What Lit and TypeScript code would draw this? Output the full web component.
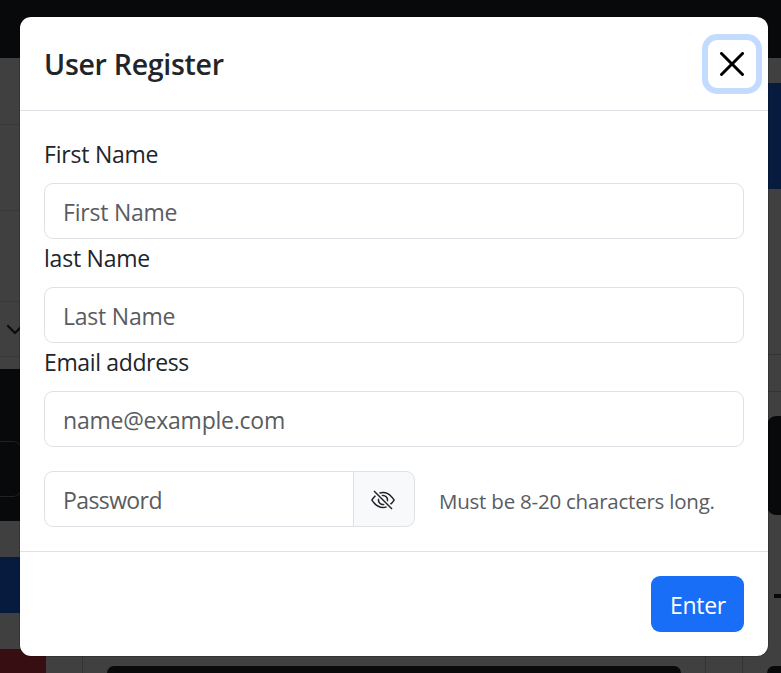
import { LitElement, html, css, svg } from "lit";
import { customElement } from "lit/decorators.js";

@customElement("page-behind")
class PageBehind extends LitElement {
  static styles = css`
    :host { display: flex; flex-direction: column; height: 100%; background: #404040; overflow: hidden; }
    .nav { height: 58px; flex: none; background: #08090b; }
    .cols { flex: 1; display: flex; min-height: 0; }
    .left { width: 82px; flex: none; border-right: 1px solid #333435; display: flex; flex-direction: column; }
    .row { box-sizing: border-box; border-bottom: 1px solid #373838; flex: none; }
    .r1 { height: 67px; }
    .r2 { height: 86px; }
    .r3 { height: 91px; }
    .r4 { height: 55px; padding: 22px 0 0 6px; }
    .r4 svg { display: block; }
    .dark { margin-top: 12px; height: 152px; flex: none; background: #08090b; box-sizing: border-box; padding-top: 72px; }
    .dark div { box-sizing: border-box; height: 56px; width: 22px; border: 1px solid #202224; border-left: 0; border-radius: 0 9px 9px 0; }
    .blue { margin-top: 36px; height: 56px; flex: none; background: #061b3e; }
    .red { margin-top: 36px; width: 46px; flex: 1; background: #370e12; }
    .mid { flex: 1; display: flex; flex-direction: column; justify-content: flex-end; padding: 0 24px; }
    .card { height: 7px; border-radius: 9px 9px 0 0; background: #08090b; }
    .gutter { width: 36px; flex: none; display: flex; align-items: stretch; border: solid #333435; border-width: 0 1px; }
    .right { width: 38px; flex: none; display: flex; flex-direction: column; }
    .rblue { margin-top: 25px; height: 106px; flex: none; background: #061b3e; }
    .line { height: 1px; flex: none; background: #333435; }
    .l1 { margin-top: 165px; }
    .l2 { margin-top: 36px; }
    .box { margin: 24px 0 0 24px; height: 99px; flex: none; border-radius: 9px 0 0 9px; background: #08090b; }
    .dash { margin: 79px 0 0 31px; height: 4px; flex: none; background: #08090b; }
    .box2 { margin: 68px 0 0 24px; flex: 1; border-radius: 9px 0 0 0; background: #08090b; }
  `;
  render() {
    return html`
      <div class="nav"></div>
      <div class="cols">
        <div class="left">
          <div class="row r1"></div>
          <div class="row r2"></div>
          <div class="row r3"></div>
          <div class="row r4">
            <svg width="18" height="12" viewBox="0 0 18 12"><path d="M2 2l7 7 7-7" fill="none" stroke="#0b0c0d" stroke-width="2.3" stroke-linecap="round" stroke-linejoin="round"/></svg>
          </div>
          <div class="dark"><div></div></div>
          <div class="blue"></div>
          <div class="red"></div>
        </div>
        <div class="mid"><div class="card"></div></div>
        <div class="gutter"></div>
        <div class="right">
          <div class="rblue"></div>
          <div class="line l1"></div>
          <div class="line l2"></div>
          <div class="box"></div>
          <div class="dash"></div>
          <div class="box2"></div>
        </div>
      </div>`;
  }
}

const closeIcon = svg`<svg width="24" height="24" viewBox="0 0 16 16" fill="#000"><path d="M.293.293a1 1 0 0 1 1.414 0L8 6.586 14.293.293a1 1 0 1 1 1.414 1.414L9.414 8l6.293 6.293a1 1 0 0 1-1.414 1.414L8 9.414l-6.293 6.293a1 1 0 0 1-1.414-1.414L6.586 8 .293 1.707a1 1 0 0 1 0-1.414z"/></svg>`;

const eyeSlash = svg`<svg width="24" height="24" viewBox="0 0 16 16" fill="#212529"><path d="M13.359 11.238C15.06 9.72 16 8 16 8s-3-5.5-8-5.5a7.028 7.028 0 0 0-2.79.588l.77.771A5.944 5.944 0 0 1 8 3.5c2.12 0 3.879 1.168 5.168 2.457A13.134 13.134 0 0 1 14.828 8c-.058.087-.122.183-.195.288-.335.48-.83 1.12-1.465 1.755-.165.165-.337.328-.517.486l.708.709z"/><path d="M11.297 9.176a3.5 3.5 0 0 0-4.474-4.474l.823.823a2.5 2.5 0 0 1 2.829 2.829l.822.822zm-2.943 1.299.822.822a3.5 3.5 0 0 1-4.474-4.474l.823.823a2.5 2.5 0 0 0 2.829 2.829z"/><path d="M3.35 5.47c-.18.16-.353.322-.518.487A13.134 13.134 0 0 0 1.172 8l.195.288c.335.48.83 1.12 1.465 1.755C4.121 11.332 5.881 12.5 8 12.5c.716 0 1.39-.133 2.02-.36l.77.772A7.029 7.029 0 0 1 8 13.5C3 13.5 0 8 0 8s.939-1.721 2.641-3.238l.708.709zm10.296 8.884-12-12 .708-.708 12 12-.708.708z"/></svg>`;

@customElement("app-root")
class AppRoot extends LitElement {
  static styles = css`
    :host { display: block; position: relative; height: 673px; overflow: hidden; font-family: "Open Sans", "Noto Sans", sans-serif; font-size: 23px; color: #212529; }
    .modal { position: absolute; top: 16px; left: 19px; box-sizing: border-box; width: 750px; height: 641px; border: 1px solid rgba(0, 0, 0, 0.175); border-radius: 12px; background: #fff; background-clip: padding-box; display: flex; flex-direction: column; }
    .header { box-sizing: border-box; height: 94px; padding: 0 12px 0 24px; border-bottom: 1px solid #dee2e6; display: flex; align-items: center; justify-content: space-between; }
    h1 { margin: 1px 0 0; font-size: 28.5px; line-height: 45px; font-weight: 600; letter-spacing: -0.28px; }
    .close { width: 48px; height: 48px; padding: 0; border: 0; border-radius: 9px; background: #fff; box-shadow: 0 0 0 6px #c2dbfe; display: grid; place-items: center; }
    .body { padding: 24px; height: 392px; }
    label { display: block; line-height: 36px; height: 36px; margin-bottom: 12px; padding-top: 1px; box-sizing: border-box; }
    input { display: block; box-sizing: border-box; width: 100%; height: 56px; padding: 1px 18px 0; border: 1px solid #dee2e6; border-radius: 9px; font: inherit; letter-spacing: inherit; color: inherit; background: #fff; outline: none; }
    input::placeholder { color: #595c5f; opacity: 1; }
    .first { letter-spacing: -0.22px; }
    .last { letter-spacing: -0.22px; }
    .email { letter-spacing: -0.23px; }
    .email label { letter-spacing: -0.36px; }
    .row { display: flex; margin-top: 24px; }
    .group { display: flex; width: 371px; letter-spacing: -0.6px; }
    .group input { width: 310px; border-radius: 9px 0 0 9px; }
    .eye { box-sizing: border-box; width: 62px; height: 56px; margin-left: -1px; border: 1px solid #dee2e6; border-radius: 0 9px 9px 0; background: #f8f9fa; padding: 2px 2px 0 0; display: grid; place-items: center; }
    .hint { margin-left: 24px; padding-top: 2px; font-size: 20.5px; letter-spacing: -0.22px; line-height: 56px; color: #595c5f; white-space: nowrap; }
    .footer { flex: 1; border-top: 1px solid #dee2e6; padding: 24px; display: flex; justify-content: flex-end; align-items: flex-start; }
    .enter { width: 93px; height: 56px; border: 0; border-radius: 9px; background: #196ef8; color: #fff; font: inherit; letter-spacing: -0.3px; padding: 2px 0 0 1px; }
    svg { display: block; }
  `;
  render() {
    return html`
      <page-behind></page-behind>
      <div class="modal" role="dialog">
        <div class="header">
          <h1>User Register</h1>
          <button class="close" aria-label="Close">${closeIcon}</button>
        </div>
        <div class="body">
          <div class="first"><label for="f">First Name</label><input id="f" placeholder="First Name" /></div>
          <div class="last"><label for="l">last Name</label><input id="l" placeholder="Last Name" /></div>
          <div class="email"><label for="e">Email address</label><input id="e" placeholder="name@example.com" /></div>
          <div class="row">
            <div class="group">
              <input type="password" placeholder="Password" />
              <button class="eye" aria-label="Show password">${eyeSlash}</button>
            </div>
            <span class="hint">Must be 8-20 characters long.</span>
          </div>
        </div>
        <div class="footer"><button class="enter">Enter</button></div>
      </div>`;
  }
}
